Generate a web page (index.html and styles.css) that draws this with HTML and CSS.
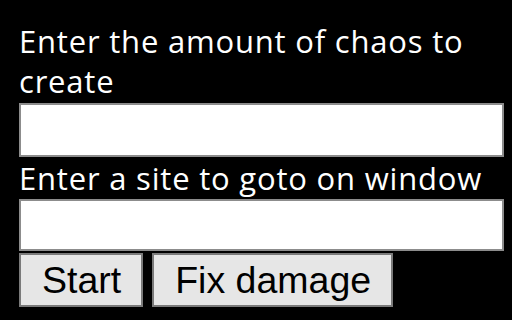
FILE: index.html
```html
<!DOCTYPE html>
<html>
<head>
<meta charset="utf-8">
<link rel="stylesheet" href="styles.css">
</head>
<body>
<div class="popup">
  <label class="lbl" for="chaos">Enter the amount of chaos to create</label>
  <input class="field" id="chaos" type="text">
  <label class="lbl lbl-site" for="site">Enter a site to goto on window</label>
  <input class="field field-site" id="site" type="text">
  <div class="actions">
    <button class="btn" type="button">Start</button>
    <button class="btn" type="button">Fix damage</button>
  </div>
</div>
</body>
</html>
```
FILE: styles.css
```css
html, body {
  margin: 0;
  padding: 0;
  background: #000;
}
body {
  width: 512px;
  height: 320px;
  overflow: hidden;
}
.popup {
  display: flex;
  flex-direction: column;
  width: 485px;
  padding: 21px 0 0 19px;
}
.lbl {
  font-family: "Open Sans", "Noto Sans", sans-serif;
  font-size: 31px;
  letter-spacing: 0.8px;
  line-height: 40px;
  color: #fff;
  margin-bottom: 2px;
}
.lbl-site {
  margin-top: 1px;
  margin-bottom: 1px;
}
.field {
  box-sizing: border-box;
  width: 485px;
  height: 54px;
  margin: 0;
  background: #fff;
  border: 2px solid #8c8c8c;
  padding: 0 6px;
  font-size: 30px;
}
.field-site {
  height: 52px;
}
.actions {
  display: flex;
  gap: 9px;
  margin-top: 2px;
}
.btn {
  box-sizing: border-box;
  height: 54px;
  margin: 0;
  padding: 0 20px 0 21px;
  font-family: "Liberation Sans", Arial, sans-serif;
  font-size: 37.5px;
  color: #000;
  background: #e6e6e6;
  border: 2px solid #7a7a7a;
  border-radius: 0;
}
```
